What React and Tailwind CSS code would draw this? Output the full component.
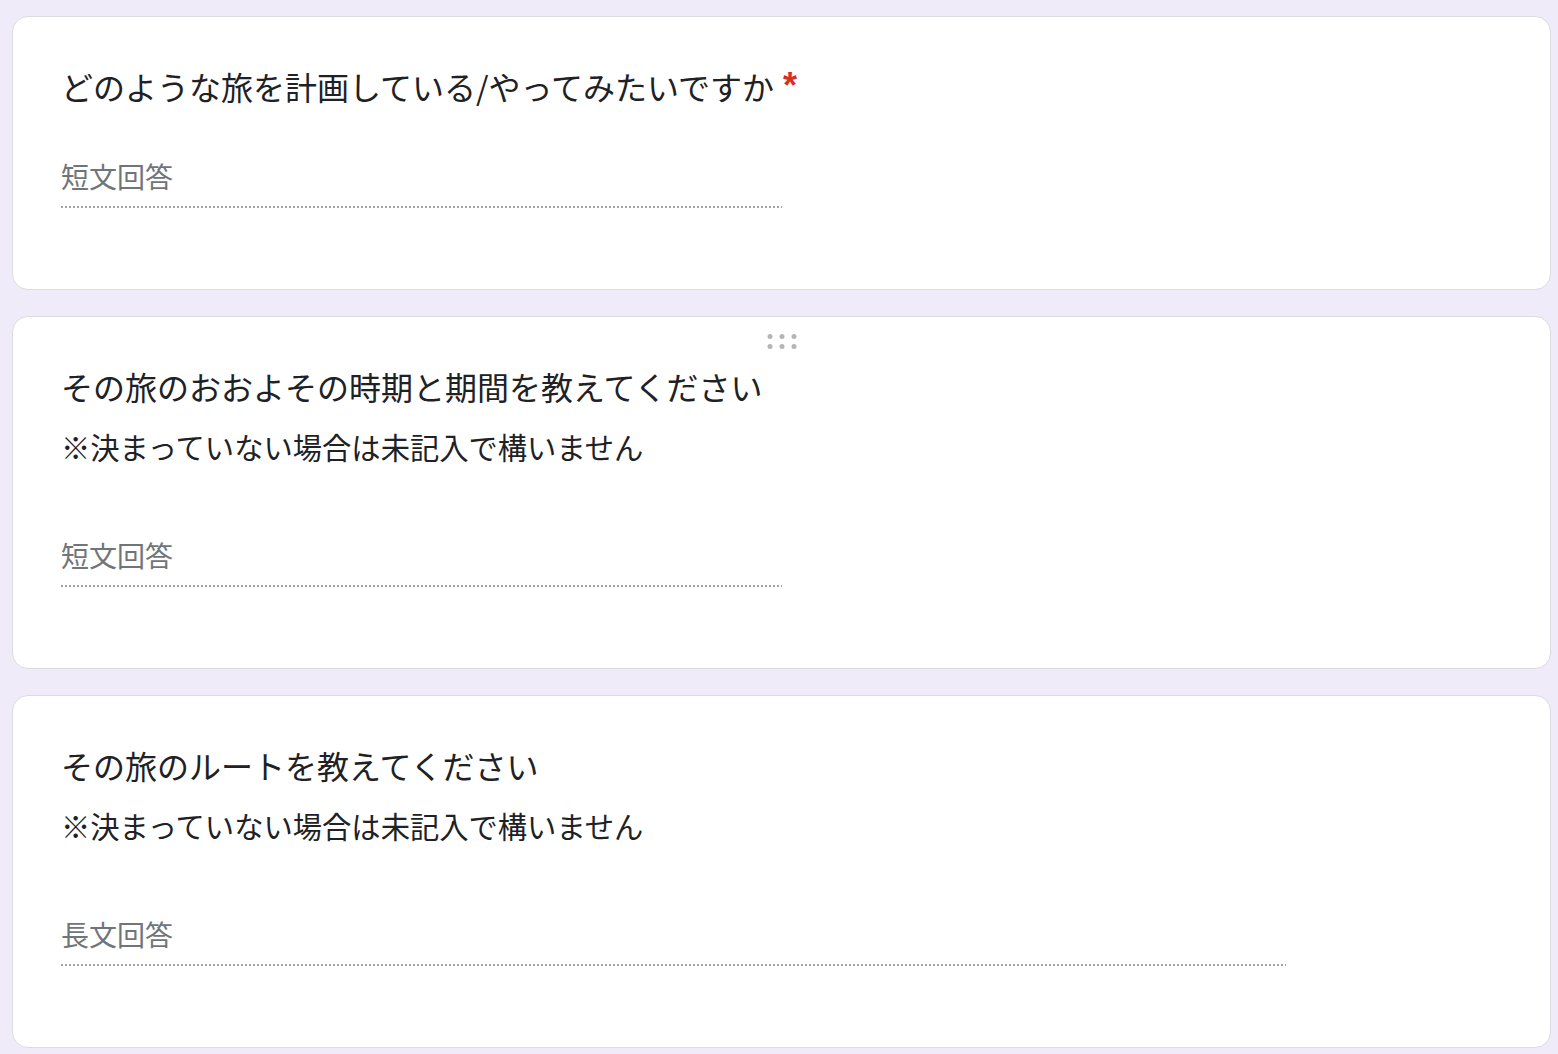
import React from "react";

const FONT = { fontFamily: '"Noto Sans CJK JP", "Noto Sans", sans-serif' };

function Line({ wide }) {
  return (
    <div
      className={`h-[2px] ${wide ? "w-[1225px]" : "w-[721px]"} bg-[linear-gradient(to_right,#a3a3a3_50%,transparent_50%)] bg-[length:4px_2px] bg-repeat-x`}
    />
  );
}

function Input({ label, wide, mt }) {
  return (
    <div className={mt}>
      <div className="text-[28px] leading-[40px] text-[#70757a] pb-[10px]">{label}</div>
      <Line wide={wide} />
    </div>
  );
}

function DragHandle() {
  return (
    <div className="absolute top-[17px] left-1/2 -translate-x-1/2 grid grid-cols-3 gap-x-[7px] gap-y-[5px]">
      {[0, 1, 2, 3, 4, 5].map((i) => (
        <div key={i} className="w-[5px] h-[5px] rounded-full bg-[#b5b5b5]" />
      ))}
    </div>
  );
}

export default function App() {
  return (
    <div className="min-h-[1054px] bg-[#f0ebf8] pt-[16px] pl-[12px] pr-[7px] pb-[6px]" style={FONT}>
      <div className="flex flex-col gap-[26px]">
        <div className="relative bg-white border border-[#dadce0] rounded-[16px] pl-[48px] pr-[48px] pt-[45px] pb-[81px]">
          <div className="text-[32px] leading-[48px] text-[#202124] flex items-start">
            <span>どのような旅を計画している/やってみたいですか</span>
            <span className="text-[#d93025] ml-[9px] mt-[2px] text-[36px] leading-[44px] font-bold" style={{ fontFamily: '"Liberation Sans", sans-serif' }}>*</span>
          </div>
          <Input label="短文回答" mt="mt-[46px]" />
        </div>

        <div className="relative bg-white border border-[#dadce0] rounded-[16px] pl-[48px] pr-[48px] pt-[45px] pb-[81px]">
          <DragHandle />
          <div className="text-[32px] leading-[48px] text-[#202124]">その旅のおおよその時期と期間を教えてください</div>
          <div className="mt-[16px] text-[29.3px] leading-[40px] text-[#202124]">※決まっていない場合は未記入で構いません</div>
          <Input label="短文回答" mt="mt-[69px]" />
        </div>

        <div className="relative bg-white border border-[#dadce0] rounded-[16px] pl-[48px] pr-[48px] pt-[45px] pb-[81px]">
          <div className="text-[32px] leading-[48px] text-[#202124]">その旅のルートを教えてください</div>
          <div className="mt-[16px] text-[29.3px] leading-[40px] text-[#202124]">※決まっていない場合は未記入で構いません</div>
          <Input label="長文回答" mt="mt-[69px]" wide />
        </div>
      </div>
    </div>
  );
}
